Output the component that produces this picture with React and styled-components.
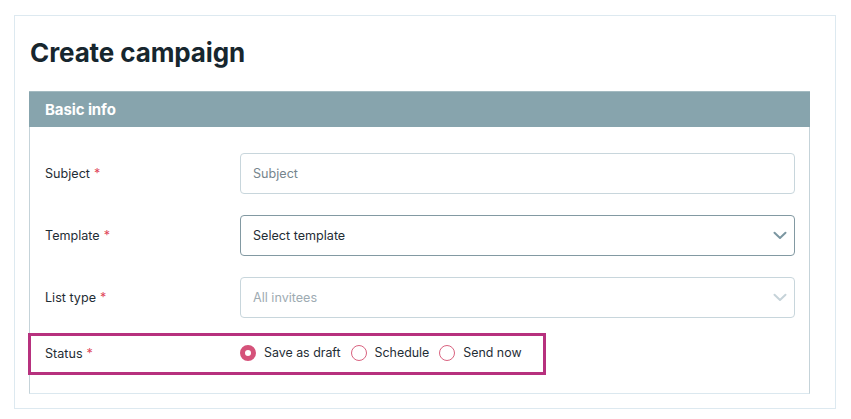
import React from "react";
import styled, { createGlobalStyle } from "styled-components";

const Global = createGlobalStyle`
  * { box-sizing: border-box; }
  html, body { margin: 0; padding: 0; background: #ffffff; }
  body { font-family: Inter, "Noto Sans", sans-serif; color: #1f2d35; }
`;

const Card = styled.div`
  margin: 15px 0 0 14px;
  width: 822px;
  height: 394px;
  border: 1px solid #dde9f0;
  padding: 13px 14px 14px 14px;
  display: flex;
  flex-direction: column;
`;

const Title = styled.h1`
  margin: 0 0 14px 1px;
  font-size: 26px;
  line-height: 48px;
  font-weight: 700;
  color: #17262e;
  letter-spacing: -0.1px;
`;

const Panel = styled.section`
  width: 781px;
  border-left: 1px solid #c5d3d9;
  border-right: 1px solid #c5d3d9;
  border-bottom: 1px solid #dbe8ef;
  flex: 1;
  display: flex;
  flex-direction: column;
`;

const PanelHeader = styled.div`
  height: 36px;
  background: #87a4ad;
  border-top: 1px solid #a3bac1;
  margin-left: -1px;
  margin-right: -1px;
  padding-left: 16px;
  display: flex;
  align-items: center;
  color: #ffffff;
  font-size: 15px;
  font-weight: 700;
  letter-spacing: -0.1px;
`;

const PanelBody = styled.div`
  padding: 26px 14px 0 15px;
  display: flex;
  flex-direction: column;
  gap: 21px;
`;

const Row = styled.div`
  display: flex;
  align-items: center;
`;

const Label = styled.div`
  width: 195px;
  flex: none;
  font-size: 12.6px;
  color: #1f2d35;
`;

const Req = styled.span`
  color: #e0475a;
  margin-left: 4px;
`;

const Field = styled.div`
  flex: 1;
  height: 41px;
  border: 1px solid ${(p) => p.$border};
  border-radius: 4px;
  padding: 0 7px 0 12px;
  display: flex;
  align-items: center;
  justify-content: space-between;
  font-size: 12.6px;
  color: ${(p) => p.$color};
  background: #ffffff;
`;

const StatusBox = styled.div`
  margin: -6px 0 0 -17px;
  width: 518px;
  height: 42px;
  border: 3px solid #b7317e;
  padding: 0 0 2px 14px;
  display: flex;
  align-items: center;
`;

const RadioGroup = styled.div`
  display: flex;
  align-items: center;
  gap: 10px;
  margin-top: -1px;
`;

const RadioItem = styled.label`
  display: flex;
  align-items: center;
  gap: 8px;
  font-size: 12.4px;
  color: #1f2d35;
`;

const Dot = styled.span`
  width: 16px;
  height: 16px;
  border-radius: 50%;
  flex: none;
  border: ${(p) => (p.$on ? "5px solid #d5527a" : "1px solid #d9627f")};
  background: #ffffff;
`;

const Chevron = ({ color }) => (
  <svg width="14" height="9" viewBox="0 0 14 9" fill="none">
    <polyline points="1.5,1.8 7,7 12.5,1.8" stroke={color} strokeWidth="2" strokeLinecap="round" strokeLinejoin="round" />
  </svg>
);

const Radio = ({ on, children }) => (
  <RadioItem>
    <Dot $on={on} />
    {children}
  </RadioItem>
);

export default function App() {
  return (
    <>
      <Global />
      <Card>
        <Title>Create campaign</Title>
        <Panel>
          <PanelHeader>Basic info</PanelHeader>
          <PanelBody>
            <Row>
              <Label>Subject<Req>*</Req></Label>
              <Field $border="#c8d6dc" $color="#76858d">Subject</Field>
            </Row>
            <Row>
              <Label>Template<Req>*</Req></Label>
              <Field $border="#8299a2" $color="#1f2d35">
                Select template
                <Chevron color="#7b96a1" />
              </Field>
            </Row>
            <Row>
              <Label>List type<Req>*</Req></Label>
              <Field $border="#c8d6dc" $color="#9eabb2">
                All invitees
                <Chevron color="#c6d3d9" />
              </Field>
            </Row>
            <StatusBox>
              <Label>Status<Req>*</Req></Label>
              <RadioGroup>
                <Radio on>Save as draft</Radio>
                <Radio>Schedule</Radio>
                <Radio>Send now</Radio>
              </RadioGroup>
            </StatusBox>
          </PanelBody>
        </Panel>
      </Card>
    </>
  );
}
